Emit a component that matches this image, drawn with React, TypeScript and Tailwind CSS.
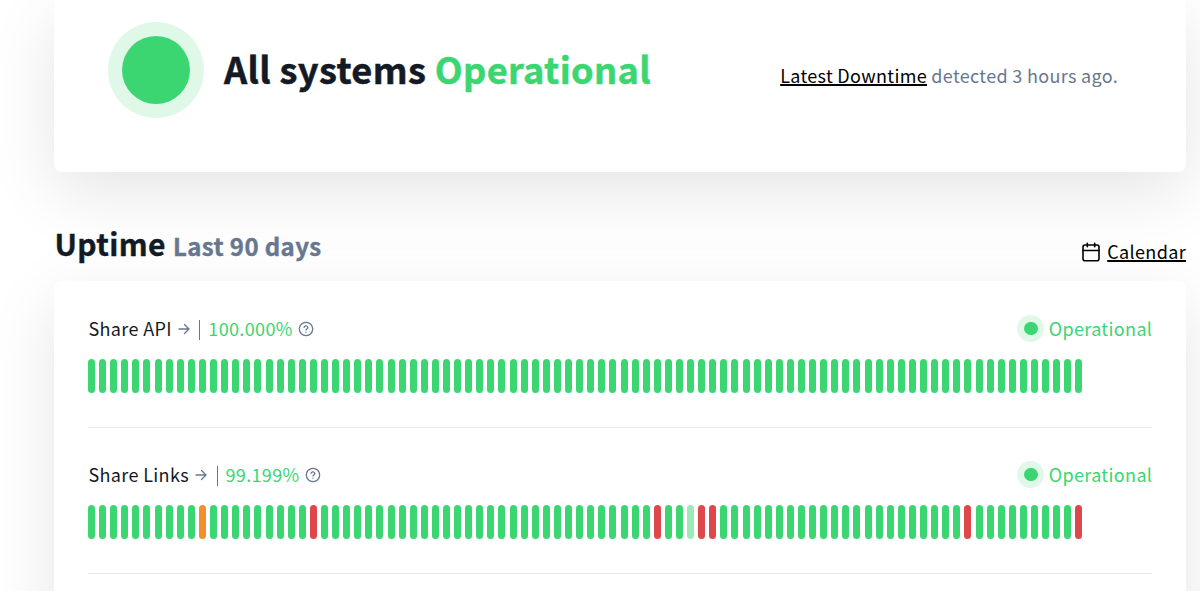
type DayStatus = 'up' | 'partial' | 'down' | 'muted';

interface Monitor {
  name: string;
  uptime: string;
  incidents: Record<number, DayStatus>;
}

const DAYS = 90;

const monitors: Monitor[] = [
  { name: 'Share API', uptime: '100.000%', incidents: {} },
  {
    name: 'Share Links',
    uptime: '99.199%',
    incidents: { 10: 'partial', 20: 'down', 51: 'down', 54: 'muted', 55: 'down', 56: 'down', 79: 'down', 89: 'down' },
  },
];

const barColors: Record<DayStatus, string> = {
  up: 'bg-[#3bd671]',
  partial: 'bg-[#f29030]',
  down: 'bg-[#df484a]',
  muted: 'bg-[#9deab8]',
};

function ArrowIcon() {
  return (
    <svg className="h-3 w-3" viewBox="0 0 12 12" fill="none" stroke="#687790" strokeWidth="1.3" strokeLinecap="round" strokeLinejoin="round">
      <path d="M1 6h10M6.5 1.5 11 6l-4.5 4.5" />
    </svg>
  );
}

function HelpIcon() {
  return (
    <svg className="h-4 w-4" viewBox="0 0 16 16" fill="none" stroke="#687790" strokeWidth="1.3" strokeLinecap="round" strokeLinejoin="round">
      <circle cx="8" cy="8" r="6.7" />
      <path d="M6.1 6.3a1.95 1.95 0 0 1 3.8.3c0 1.3-1.9 1.5-1.9 2.3" />
      <path d="M8 11.1v.1" />
    </svg>
  );
}

function CalendarIcon() {
  return (
    <svg className="h-5 w-[18px]" viewBox="0 0 18 20" fill="none" stroke="#000000" strokeWidth="1.6" strokeLinecap="round" strokeLinejoin="round">
      <rect x="1" y="3" width="16" height="15.8" rx="2" />
      <path d="M1 8.5h16M5.3 1.2v3.6M12.7 1.2v3.6" />
    </svg>
  );
}

function MonitorRow({ monitor }: { monitor: Monitor }) {
  return (
    <section className="h-[115px] border-b border-[#e9eaec]">
      <div className="flex h-8 items-center justify-between text-[18px] leading-8 tracking-[0.35px]">
        <div className="flex items-center pl-[0.5px]">
          <span className="-mt-0.5 text-[#131a26]">{monitor.name}</span>
          <span className="ml-1.5"><ArrowIcon /></span>
          <span className="ml-[9.5px] mt-0.5 h-5 w-px bg-[#687790]" />
          <span className="-mt-0.5 ml-2 text-[#3bd671]">{monitor.uptime}</span>
          <span className="ml-[5.5px]"><HelpIcon /></span>
        </div>
        <div className="flex items-center text-[#3bd671]">
          <span className="-mt-px mr-[4.5px] flex h-[27px] w-[27px] items-center justify-center rounded-full bg-[#e0f8e8]">
            <span className="h-[13.5px] w-[13.5px] rounded-full bg-[#3bd671]" />
          </span>
          <span className="-mr-[0.35px] -mt-0.5">Operational</span>
        </div>
      </div>
      <div className="mt-[14px] flex h-[34px] w-[994.5px] justify-between">
        {Array.from({ length: DAYS }, (_, day) => (
          <span key={day} className={`w-[7px] rounded-full ${barColors[monitor.incidents[day] ?? 'up']}`} />
        ))}
      </div>
    </section>
  );
}

export default function App() {
  return (
    <main className="h-[591px] overflow-hidden bg-white pl-[54px] pr-[14px] font-['Noto_Sans_CJK_SC',sans-serif] text-[#131a26]">
      <header className="flex h-[172px] items-start justify-between rounded-b-[8px] bg-white pl-[54px] pr-[68px] pt-[22px] shadow-[0_20px_68px_rgba(0,0,0,0.105)]">
        <div className="flex items-center">
          <span className="flex h-24 w-24 items-center justify-center rounded-full bg-[#e0f8e8]">
            <span className="h-[68px] w-[68px] rounded-full bg-[#3bd671]" />
          </span>
          <h1 className="-mt-1 ml-5 whitespace-nowrap text-[36.2px] font-bold leading-[48px] tracking-[0.35px] [-webkit-text-stroke:0.5px]">
            All systems <span className="text-[#3bd671]">Operational</span>
          </h1>
        </div>
        <p className="mt-[37px] whitespace-nowrap text-[18px] leading-8 tracking-[0.32px] text-[#687790]">
          <a className="text-black underline decoration-[1.6px]">Latest Downtime</a> detected 3 hours ago.
        </p>
      </header>
      <div className="flex h-[109px] items-start justify-between">
        <h2 className="ml-[0.5px] mt-[47px] whitespace-nowrap text-[30px] font-bold leading-[48px] tracking-[0.38px] [-webkit-text-stroke:0.4px]">
          Uptime <span className="text-[24px] text-[#687790]">Last 90 days</span>
        </h2>
        <a className="mt-[65px] flex items-center text-[18px] leading-8 tracking-[0.35px] text-black">
          <CalendarIcon />
          <span className="-mt-0.5 ml-[7px] underline decoration-[1.6px]">Calendar</span>
        </a>
      </div>
      <div className="flex h-[800px] flex-col gap-[31px] rounded-[8px] bg-white px-[34px] pt-8 shadow-[0_20px_68px_rgba(0,0,0,0.1)]">
        <MonitorRow monitor={monitors[0]} />
        <MonitorRow monitor={monitors[1]} />
      </div>
    </main>
  );
}
